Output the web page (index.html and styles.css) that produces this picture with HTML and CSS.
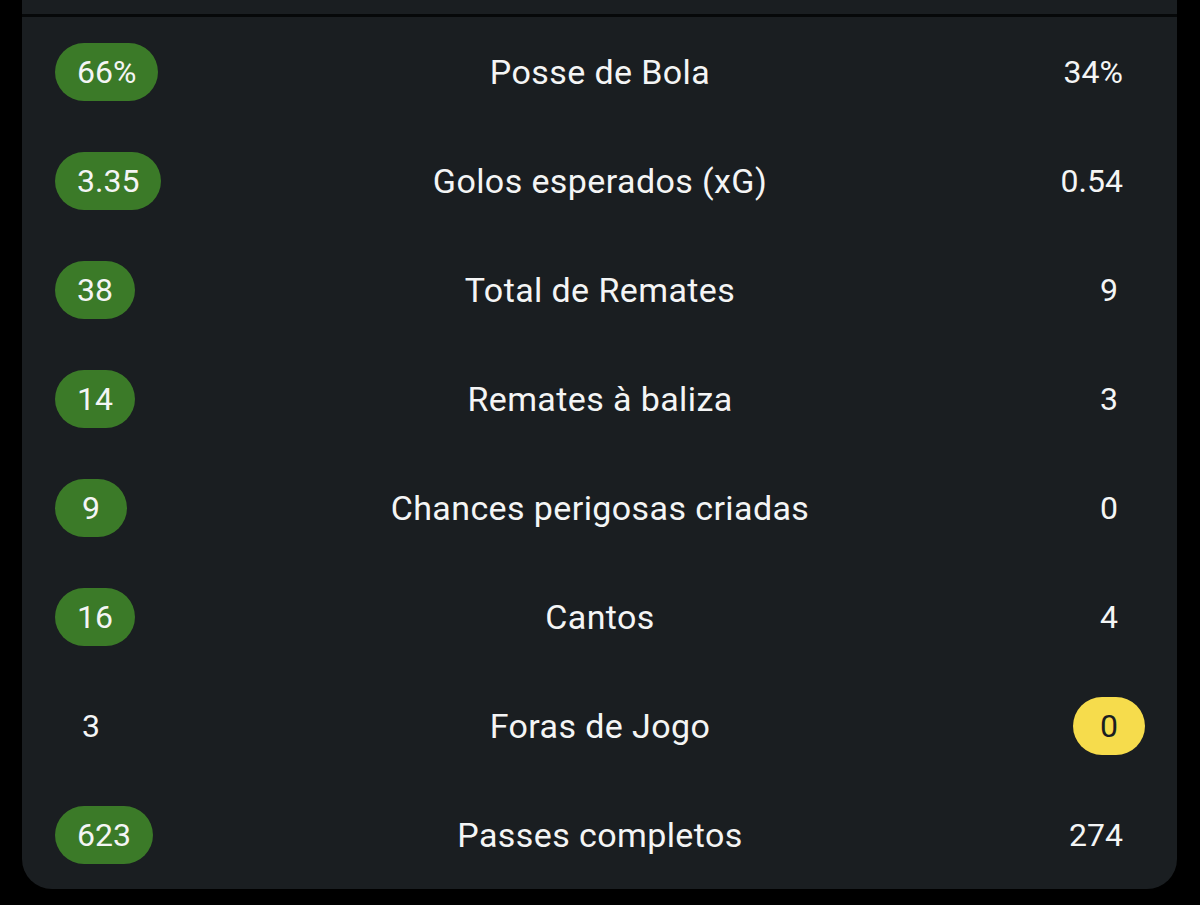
FILE: index.html
```html
<!DOCTYPE html>
<html>
<head>
  <meta charset="utf-8">
  <title>Estatísticas</title>
  <link rel="stylesheet" href="styles.css">
</head>
<body>
  <div class="card">
    <div class="card-top"></div>
    <div class="divider"></div>

    <div class="row">
      <div class="home"><span class="val win">66%</span></div>
      <div class="label">Posse de Bola</div>
      <div class="away"><span class="val">34%</span></div>
    </div>
    <div class="row">
      <div class="home"><span class="val win">3.35</span></div>
      <div class="label">Golos esperados (xG)</div>
      <div class="away"><span class="val">0.54</span></div>
    </div>
    <div class="row">
      <div class="home"><span class="val win">38</span></div>
      <div class="label">Total de Remates</div>
      <div class="away"><span class="val">9</span></div>
    </div>
    <div class="row">
      <div class="home"><span class="val win">14</span></div>
      <div class="label">Remates à baliza</div>
      <div class="away"><span class="val">3</span></div>
    </div>
    <div class="row">
      <div class="home"><span class="val win">9</span></div>
      <div class="label">Chances perigosas criadas</div>
      <div class="away"><span class="val">0</span></div>
    </div>
    <div class="row">
      <div class="home"><span class="val win">16</span></div>
      <div class="label">Cantos</div>
      <div class="away"><span class="val">4</span></div>
    </div>
    <div class="row">
      <div class="home"><span class="val">3</span></div>
      <div class="label">Foras de Jogo</div>
      <div class="away"><span class="val best">0</span></div>
    </div>
    <div class="row">
      <div class="home"><span class="val win">623</span></div>
      <div class="label">Passes completos</div>
      <div class="away"><span class="val">274</span></div>
    </div>
  </div>
</body>
</html>
```

FILE: styles.css
```css
body {
  margin: 0;
  background-color: #000;
  font-family: Roboto, "Open Sans", sans-serif;
  color: #f4f5f5;
}
.card {
  margin: 0 23px 0 22px;
  background-color: #1a1e21;
  border-radius: 0 0 30px 30px;
  overflow: hidden;
}
.card-top {
  height: 14px;
}
.divider {
  height: 3px;
  background-color: #060809;
}
.row {
  display: grid;
  grid-template-columns: 1fr auto 1fr;
  align-items: center;
  height: 109px;
  padding: 0 32px 0 33px;
}
.home {
  display: flex;
  justify-content: flex-start;
}
.away {
  display: flex;
  justify-content: flex-end;
}
.label {
  font-size: 34px;
  letter-spacing: 0.4px;
  line-height: 40px;
  text-align: center;
}
.val {
  box-sizing: border-box;
  display: inline-block;
  min-width: 72px;
  height: 58px;
  line-height: 58px;
  padding: 0 22px;
  border-radius: 29px;
  font-size: 32px;
  text-align: center;
}
.val.win {
  background-color: #3b7a28;
}
.val.best {
  background-color: #f6dc4c;
  color: #1a1e21;
}
```
